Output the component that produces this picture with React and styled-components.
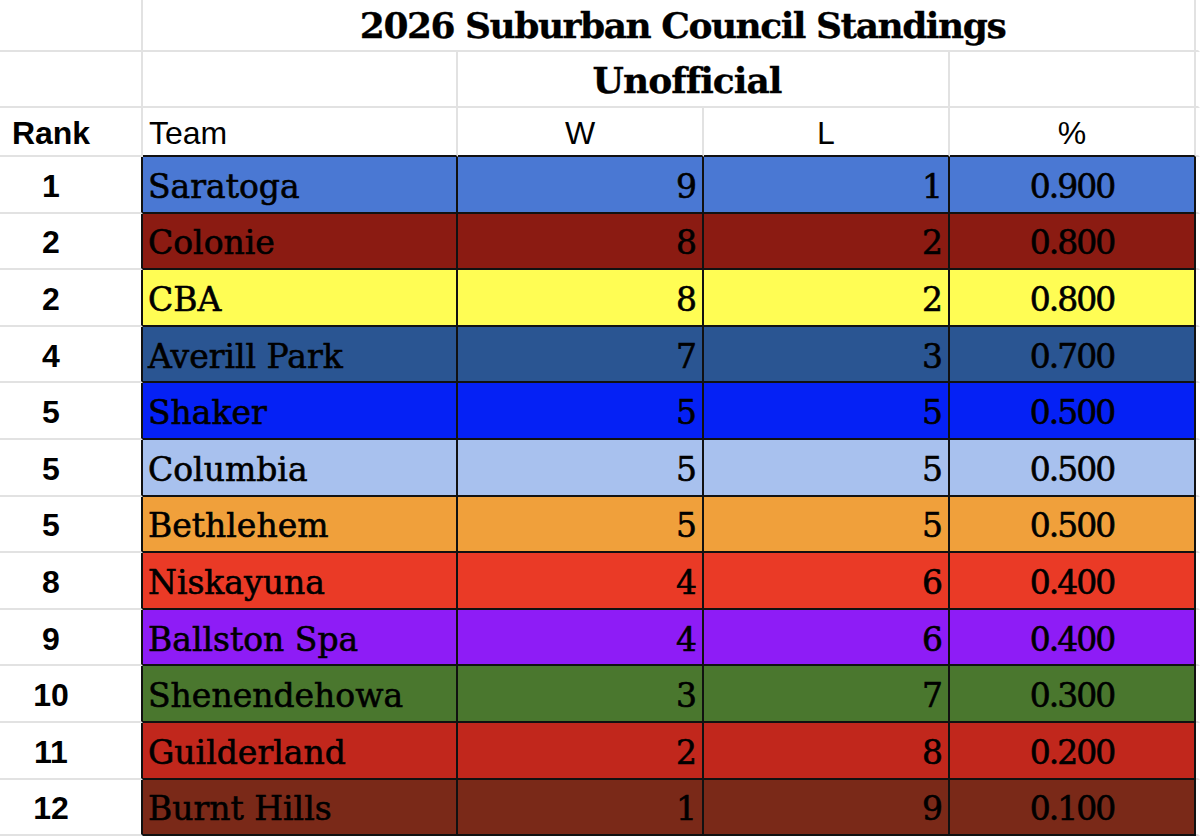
import React from "react";
import styled, { createGlobalStyle } from "styled-components";

const GlobalStyle = createGlobalStyle`
  html, body {
    margin: 0;
    padding: 0;
    background: #ffffff;
    overflow: hidden;
  }
`;

const GRID = "#e2e2e2";
const INK = "#111111";

const Sheet = styled.div`
  display: grid;
  grid-template-columns: 143px 315px 246px 246px 246px 4px;
  grid-template-rows: 52px 56px 49px repeat(12, 56.6px);
  width: 1200px;
  height: 838px;
  background: #fff;
`;

const Cell = styled.div`
  box-sizing: border-box;
  display: flex;
  align-items: center;
  justify-content: ${(p) => p.$align || "flex-start"};
  grid-column: ${(p) => p.$span || "auto"};
  background: ${(p) => p.$fill || "transparent"};
  border-right: 2px solid ${(p) => p.$right || GRID};
  border-bottom: 2px solid ${(p) => p.$bottom || GRID};
  overflow: hidden;
  white-space: nowrap;
  color: #000;
`;

const Title = styled(Cell)`
  font-family: "DejaVu Serif", "Liberation Serif", serif;
  font-weight: bold;
  font-size: 36px;
  letter-spacing: -1.5px;
  justify-content: center;
  padding-left: 28px;
  -webkit-text-stroke: 0.3px #000;
`;

const Subtitle = styled(Title)`
  letter-spacing: -1px;
  padding-left: 0;
  padding-right: 32px;
  padding-top: 2px;
`;

const Head = styled(Cell)`
  font-family: "Liberation Sans", Arial, sans-serif;
  font-size: 32px;
  font-weight: ${(p) => (p.$bold ? "bold" : "normal")};
  padding-left: ${(p) => (p.$align ? "0" : "6px")};
  padding-right: ${(p) => p.$pr || "0"};
  padding-top: 3px;
`;

const RankCell = styled(Cell)`
  font-family: "Liberation Sans", Arial, sans-serif;
  font-weight: bold;
  font-size: 32px;
  justify-content: center;
  padding-right: 39px;
  padding-top: 4px;
`;

const serifInk = `
  font-family: "DejaVu Serif", "Liberation Serif", serif;
  font-size: 33px;
  -webkit-text-stroke: 0.6px #000;
  padding-top: 4px;
`;

const TeamCell = styled(Cell)`
  ${serifInk}
  padding-left: 5px;
`;

const NumCell = styled(Cell)`
  ${serifInk}
  letter-spacing: ${(p) => (p.$pct ? "-2px" : "0")};
  justify-content: ${(p) => (p.$pct ? "center" : "flex-end")};
  padding-right: ${(p) => (p.$pct ? "0" : "5px")};
`;

const standings = [
  { rank: 1, team: "Saratoga", w: 9, l: 1, pct: "0.900", color: "#4a78d3" },
  { rank: 2, team: "Colonie", w: 8, l: 2, pct: "0.800", color: "#8b1b12" },
  { rank: 2, team: "CBA", w: 8, l: 2, pct: "0.800", color: "#fffd54" },
  { rank: 4, team: "Averill Park", w: 7, l: 3, pct: "0.700", color: "#2a5592" },
  { rank: 5, team: "Shaker", w: 5, l: 5, pct: "0.500", color: "#0521f5" },
  { rank: 5, team: "Columbia", w: 5, l: 5, pct: "0.500", color: "#a8c1ee" },
  { rank: 5, team: "Bethlehem", w: 5, l: 5, pct: "0.500", color: "#f0a03b" },
  { rank: 8, team: "Niskayuna", w: 4, l: 6, pct: "0.400", color: "#ea3a26" },
  { rank: 9, team: "Ballston Spa", w: 4, l: 6, pct: "0.400", color: "#8e1cf6" },
  { rank: 10, team: "Shenendehowa", w: 3, l: 7, pct: "0.300", color: "#4a772e" },
  { rank: 11, team: "Guilderland", w: 2, l: 8, pct: "0.200", color: "#c1271c" },
  { rank: 12, team: "Burnt Hills", w: 1, l: 9, pct: "0.100", color: "#7a2918" },
];

const App = () => {
  return (
    <>
      <GlobalStyle />
      <Sheet>
        {/* row 1: title */}
        <Cell />
        <Title $span="span 4">2026 Suburban Council Standings</Title>
        <Cell $right="transparent" />

        {/* row 2: subtitle */}
        <Cell />
        <Cell />
        <Subtitle $span="span 2">Unofficial</Subtitle>
        <Cell />
        <Cell $right="transparent" />

        {/* row 3: headers */}
        <Head $bold $align="center" $pr="39px">
          Rank
        </Head>
        <Head $bottom={INK}>Team</Head>
        <Head $align="center" $bottom={INK}>
          W
        </Head>
        <Head $align="center" $bottom={INK}>
          L
        </Head>
        <Head $align="center" $bottom={INK}>
          %
        </Head>
        <Cell $right="transparent" />

        {standings.map((s) => (
          <React.Fragment key={s.team}>
            <RankCell $right={INK}>{s.rank}</RankCell>
            <TeamCell $fill={s.color} $right={INK} $bottom={INK}>
              {s.team}
            </TeamCell>
            <NumCell $fill={s.color} $right={INK} $bottom={INK}>
              {s.w}
            </NumCell>
            <NumCell $fill={s.color} $right={INK} $bottom={INK}>
              {s.l}
            </NumCell>
            <NumCell $pct $fill={s.color} $right={INK} $bottom={INK}>
              {s.pct}
            </NumCell>
            <Cell $right="transparent" />
          </React.Fragment>
        ))}
      </Sheet>
    </>
  );
};

export default App;
